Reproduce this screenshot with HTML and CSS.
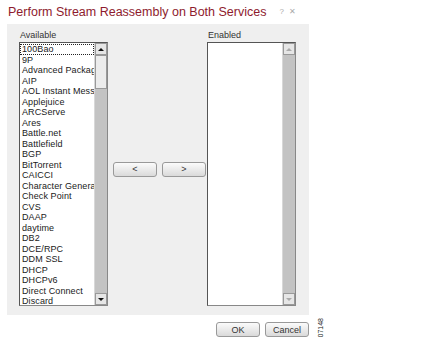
FILE: index.html
```html
<!DOCTYPE html>
<html lang="en">
<head>
  <meta charset="UTF-8">
  <title>Perform Stream Reassembly on Both Services</title>
  <link rel="stylesheet" href="styles.css">
</head>
<body>
  <div class="dialog">
    <div class="titlebar">
      <div class="title">Perform Stream Reassembly on Both Services</div>
      <div class="title-icons"><span>?</span><span>&#x2715;</span></div>
    </div>

    <div class="panel">
      <div class="column">
        <div class="label">Available</div>
        <div class="listbox">
          <ul class="items">
            <li class="focused">100Bao</li>
            <li>9P</li>
            <li>Advanced Packaging Tool</li>
            <li>AIP</li>
            <li>AOL Instant Messenger</li>
            <li>Applejuice</li>
            <li>ARCServe</li>
            <li>Ares</li>
            <li>Battle.net</li>
            <li>Battlefield</li>
            <li>BGP</li>
            <li>BitTorrent</li>
            <li>CAICCI</li>
            <li>Character Generator</li>
            <li>Check Point</li>
            <li>CVS</li>
            <li>DAAP</li>
            <li>daytime</li>
            <li>DB2</li>
            <li>DCE/RPC</li>
            <li>DDM SSL</li>
            <li>DHCP</li>
            <li>DHCPv6</li>
            <li>Direct Connect</li>
            <li>Discard</li>
          </ul>
          <div class="scrollbar">
            <div class="sb-btn up"></div>
            <div class="sb-track"><div class="sb-thumb"></div></div>
            <div class="sb-btn down"></div>
          </div>
        </div>
      </div>

      <div class="moves">
        <button class="btn">&lt;</button>
        <button class="btn">&gt;</button>
      </div>

      <div class="column">
        <div class="label">Enabled</div>
        <div class="listbox">
          <ul class="items"></ul>
          <div class="scrollbar">
            <div class="sb-btn up disabled"></div>
            <div class="sb-track"></div>
            <div class="sb-btn down disabled"></div>
          </div>
        </div>
      </div>
    </div>

    <div class="footer">
      <button class="btn">OK</button>
      <button class="btn">Cancel</button>
      <div class="fig-num">307148</div>
    </div>
  </div>
</body>
</html>
```

FILE: styles.css
```css
* {
  box-sizing: border-box;
}

body {
  margin: 0;
  background: #fff;
  font-family: "Liberation Sans", sans-serif;
  color: #111;
}

.dialog {
  width: 302px;
  margin-left: 7px;
}

.titlebar {
  display: flex;
  align-items: center;
  justify-content: space-between;
  height: 24px;
  padding: 0 0 1px 1px;
}

.title {
  font-size: 12.5px;
  color: #8e1b2e;
  white-space: nowrap;
}

.title-icons {
  display: flex;
  gap: 5px;
  margin-right: 13px;
  font-size: 8px;
  color: #aaa;
}

.panel {
  display: flex;
  align-items: stretch;
  background: #efefef;
  height: 291px;
  padding: 5px 13px 9px 12px;
}

.column {
  display: flex;
  flex-direction: column;
  width: 89px;
}

.label {
  height: 13px;
  font-size: 9px;
  line-height: 13px;
  padding-left: 1px;
  color: #333;
}

.listbox {
  flex: 1;
  display: flex;
  background: #fff;
  border: 1px solid #888;
  border-top-color: #555;
  border-left-color: #555;
  overflow: hidden;
}

.items {
  flex: 1;
  min-width: 0;
  list-style: none;
  margin: 0;
  padding: 1px 0 0 0;
  overflow: hidden;
  font-size: 9px;
  letter-spacing: 0.1px;
  color: #1a1a1a;
}

.items li {
  height: 10.5px;
  line-height: 10.5px;
  padding-left: 2px;
  white-space: nowrap;
  overflow: hidden;
}

.items li.focused {
  outline: 1px dotted #222;
  outline-offset: -1px;
}

.scrollbar {
  width: 13px;
  flex-shrink: 0;
  display: flex;
  flex-direction: column;
  background: #c3c3c3;
  border-left: 1px solid #d8d8d8;
}

.sb-btn {
  height: 12px;
  background: #e6e6e6;
  border: 1px solid #999;
  display: flex;
  align-items: center;
  justify-content: center;
}

.sb-btn::after {
  content: "";
  border-left: 3px solid transparent;
  border-right: 3px solid transparent;
}

.sb-btn.up::after {
  border-bottom: 3px solid #111;
}

.sb-btn.down::after {
  border-top: 3px solid #111;
}

.sb-btn.disabled::after {
  border-bottom-color: #aaa;
  border-top-color: #aaa;
}

.sb-track {
  flex: 1;
}

.sb-thumb {
  height: 34px;
  background: #ececec;
  border: 1px solid #999;
}

.moves {
  display: flex;
  align-items: center;
  gap: 5px;
  margin: 0 1px 0 5px;
  padding-top: 3px;
}

.btn {
  width: 44px;
  height: 15px;
  padding: 0;
  border: 1px solid #999;
  border-radius: 3px;
  background: linear-gradient(#fbfbfb, #dadada);
  font-family: "Liberation Sans", sans-serif;
  font-size: 9px;
  color: #333;
}

.footer {
  display: flex;
  justify-content: flex-end;
  align-items: flex-start;
  gap: 5px;
  padding-top: 7px;
  position: relative;
}

.fig-num {
  position: absolute;
  left: 310px;
  top: 3px;
  writing-mode: vertical-rl;
  transform: rotate(180deg);
  font-size: 7px;
  color: #222;
}
```
